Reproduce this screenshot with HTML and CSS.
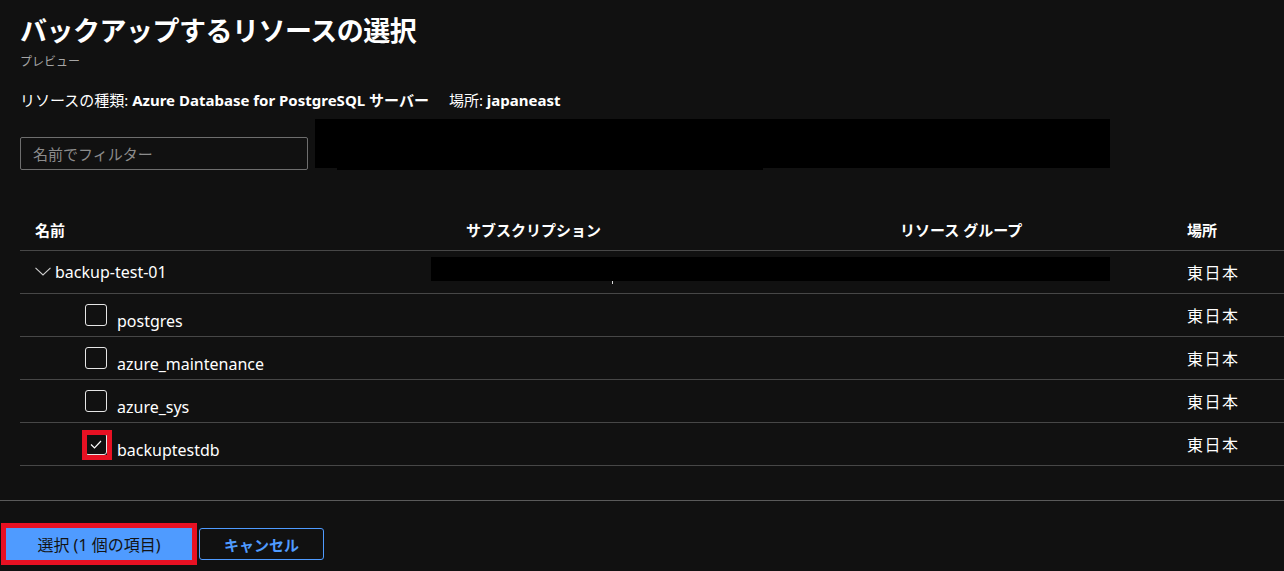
FILE: index.html
```html
<!DOCTYPE html>
<html lang="ja">
<head>
<meta charset="utf-8">
<title>バックアップするリソースの選択</title>
<link rel="stylesheet" href="styles.css">
</head>
<body>
<div class="dialog">
  <header class="head">
    <h1 class="title">バックアップするリソースの選択</h1>
    <div class="subtitle">プレビュー</div>
    <div class="info"><span>リソースの種類: </span><b>Azure Database for PostgreSQL サーバー</b><span class="gap"></span><span>場所: </span><b>japaneast</b></div>
  </header>

  <div class="filter-row">
    <input class="filter" type="text" placeholder="名前でフィルター">
    <div class="redact redact-top"></div>
  </div>

  <div class="table">
    <div class="row row-head">
      <div class="cell">名前</div>
      <div class="cell">サブスクリプション</div>
      <div class="cell">リソース グループ</div>
      <div class="cell">場所</div>
    </div>

    <div class="row">
      <div class="cell name group">
        <svg class="chev" width="16" height="9" viewBox="0 0 16 9"><polyline points="0.5,0.8 8,8 15.5,0.8" fill="none" stroke="#cfcfcf" stroke-width="1.1"/></svg>
        <span>backup-test-01</span>
      </div>
      <div class="cell"></div>
      <div class="cell"></div>
      <div class="cell loc">東日本</div>
      <div class="redact redact-row"></div>
      <div class="redact-dot"></div>
    </div>

    <div class="row">
      <div class="cell name child"><span class="cb"></span><span class="lbl">postgres</span></div>
      <div class="cell"></div>
      <div class="cell"></div>
      <div class="cell loc">東日本</div>
    </div>

    <div class="row">
      <div class="cell name child"><span class="cb"></span><span class="lbl">azure_maintenance</span></div>
      <div class="cell"></div>
      <div class="cell"></div>
      <div class="cell loc">東日本</div>
    </div>

    <div class="row">
      <div class="cell name child"><span class="cb"></span><span class="lbl">azure_sys</span></div>
      <div class="cell"></div>
      <div class="cell"></div>
      <div class="cell loc">東日本</div>
    </div>

    <div class="row">
      <div class="cell name child"><span class="cb checked"><svg width="20" height="20" viewBox="0 0 20 20"><polyline points="5,10.5 8.5,14 15,7" fill="none" stroke="#ffffff" stroke-width="1.2"/></svg></span><span class="lbl">backuptestdb</span></div>
      <div class="cell"></div>
      <div class="cell"></div>
      <div class="cell loc">東日本</div>
    </div>
  </div>

  <footer class="footer">
    <button class="btn btn-primary">選択 (1 個の項目)</button>
    <button class="btn btn-secondary">キャンセル</button>
  </footer>
</div>
</body>
</html>
```

FILE: styles.css
```css
html, body {
  margin: 0;
  padding: 0;
  background: #111111;
  overflow: hidden;
}

body {
  width: 1284px;
  height: 571px;
  color: #ffffff;
  font-family: "Noto Sans", "Noto Sans CJK JP", sans-serif;
}

.dialog {
  display: flex;
  flex-direction: column;
}

.head {
  padding: 14px 0 0 20px;
}

.title {
  margin: 0;
  font-size: 27px;
  line-height: 34px;
  font-weight: 600;
  letter-spacing: -0.5px;
  color: #ffffff;
}

.subtitle {
  margin-top: 6px;
  font-size: 12px;
  line-height: 16px;
  color: #a6a6a6;
}

.info {
  margin-top: 20px;
  font-size: 15px;
  line-height: 20px;
  color: #ffffff;
}

.info b {
  font-weight: 700;
}

.info .gap {
  display: inline-block;
  width: 20px;
}

.filter-row {
  display: flex;
  align-items: flex-start;
  gap: 7px;
  margin: 9px 0 0 20px;
}

.filter {
  box-sizing: border-box;
  width: 288px;
  height: 33px;
  margin-top: 18px;
  padding: 0 12px;
  background: #111111;
  border: 1px solid #6e6e6e;
  border-radius: 2px;
  color: #ffffff;
  font-family: "Noto Sans", "Noto Sans CJK JP", sans-serif;
  font-size: 15px;
  outline: none;
}

.filter::placeholder {
  color: #8c8c8c;
}

.redact {
  background: #000000;
}

.redact-top {
  position: relative;
  width: 795px;
  height: 49px;
}

.redact-top::after {
  content: "";
  position: absolute;
  left: 22px;
  bottom: -2px;
  width: 426px;
  height: 2px;
  background: #000000;
}

.table {
  margin: 38px 0 34px 20px;
}

.row {
  position: relative;
  box-sizing: border-box;
  height: 43px;
  display: grid;
  grid-template-columns: 431px 434px 287px 1fr;
  border-bottom: 1px solid #474747;
}

.cell {
  padding-left: 15px;
  display: flex;
  align-items: center;
  font-size: 16px;
  color: #ffffff;
}

.row-head .cell {
  font-size: 15px;
  font-weight: 700;
}

.loc {
  font-size: 16px;
  letter-spacing: 1.5px;
}

.group {
  gap: 4px;
}

.chev {
  margin-top: -1px;
}

.child {
  align-items: flex-start;
  padding: 10px 0 0 65px;
}

.cb {
  position: relative;
  box-sizing: border-box;
  flex: none;
  width: 22px;
  height: 22px;
  border: 1px solid #e6e6e6;
  border-radius: 3px;
  display: flex;
  align-items: center;
  justify-content: center;
}

.cb.checked::after {
  content: "";
  position: absolute;
  left: -4px;
  top: -4px;
  width: 30px;
  height: 30px;
  box-sizing: border-box;
  border: 5px solid #e81123;
}

.lbl {
  margin: 6px 0 0 10px;
  line-height: 22px;
  font-size: 16px;
}

.redact-row {
  position: absolute;
  left: 411px;
  top: 6px;
  width: 679px;
  height: 24px;
}

.redact-dot {
  position: absolute;
  left: 592px;
  top: 30px;
  width: 1px;
  height: 3px;
  background: #d8d8d8;
}

.footer {
  border-top: 1px solid #5a5a5a;
  padding: 27px 0 0 6px;
  display: flex;
  gap: 7px;
}

.btn {
  box-sizing: border-box;
  height: 32px;
  font-family: "Noto Sans", "Noto Sans CJK JP", sans-serif;
  cursor: pointer;
  padding: 0;
}

.btn-primary {
  width: 186px;
  background: #4f9bff;
  border: 1px solid #4f9bff;
  border-radius: 0;
  color: #141414;
  font-size: 16px;
  font-weight: 400;
  box-shadow: 0 0 0 5px #e81123;
}

.btn-secondary {
  width: 125px;
  background: #111111;
  border: 1px solid #4f9bff;
  color: #4f9bff;
  font-size: 15px;
  font-weight: 700;
  border-radius: 3px;
}
```
